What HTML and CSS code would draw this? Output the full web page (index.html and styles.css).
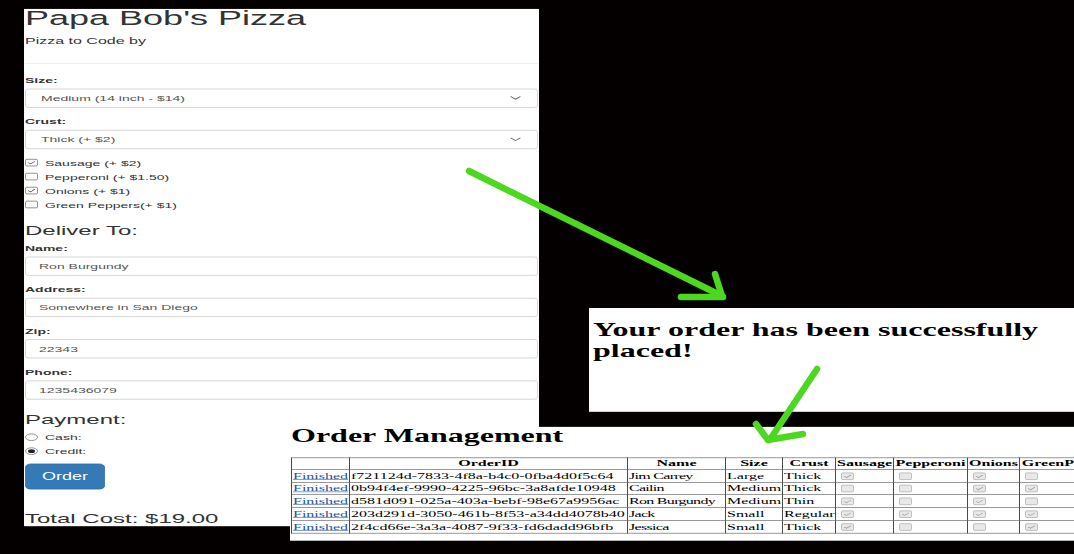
FILE: index.html
```html
<!DOCTYPE html>
<html lang="en">
<head>
<meta charset="utf-8">
<title>Papa Bob's Pizza</title>
<link rel="stylesheet" href="styles.css">
</head>
<body>
<div class="stage">
  <section class="win order-form">
    <h1 class="brand">Papa Bob's Pizza</h1>
    <p class="lead">Pizza to Code by</p>
    <hr class="rule">

    <div class="form-group">
      <div class="lbl">Size:</div>
      <div class="control select"><span>Medium (14 inch - $14)</span><svg class="chev" viewBox="0 0 11 7"><path d="M0.6 0.8 L5.5 6 L10.4 0.8"/></svg></div>
    </div>
    <div class="form-group">
      <div class="lbl">Crust:</div>
      <div class="control select"><span>Thick (+ $2)</span><svg class="chev" viewBox="0 0 11 7"><path d="M0.6 0.8 L5.5 6 L10.4 0.8"/></svg></div>
    </div>

    <div class="check"><span class="box on"><svg viewBox="0 0 13 13"><path d="M2.5 6.5 L5.3 9.2 L10.5 3.8"/></svg></span>Sausage (+ $2)</div>
    <div class="check"><span class="box"></span>Pepperoni (+ $1.50)</div>
    <div class="check"><span class="box on"><svg viewBox="0 0 13 13"><path d="M2.5 6.5 L5.3 9.2 L10.5 3.8"/></svg></span>Onions (+ $1)</div>
    <div class="check"><span class="box"></span>Green Peppers(+ $1)</div>

    <h3 class="sub">Deliver To:</h3>
    <div class="form-group">
      <div class="lbl">Name:</div>
      <div class="control">Ron Burgundy</div>
    </div>
    <div class="form-group">
      <div class="lbl">Address:</div>
      <div class="control">Somewhere in San Diego</div>
    </div>
    <div class="form-group">
      <div class="lbl">Zip:</div>
      <div class="control">22343</div>
    </div>
    <div class="form-group">
      <div class="lbl">Phone:</div>
      <div class="control">1235436079</div>
    </div>

    <h3 class="sub">Payment:</h3>
    <div class="radio"><span class="dot"></span>Cash:</div>
    <div class="radio"><span class="dot on"></span>Credit:</div>

    <div class="actions"><span class="btn">Order</span></div>

    <h3 class="sub total">Total Cost: $19.00</h3>
  </section>

  <section class="win notice">
    <h1 class="notice-text">Your order has been successfully placed!</h1>
  </section>

  <section class="win manage">
    <h1 class="manage-title">Order Management</h1>
    <table class="orders">
      <colgroup>
        <col class="c1"><col class="c2"><col class="c3"><col class="c4"><col class="c5"><col class="c6"><col class="c7"><col class="c8"><col class="c9">
      </colgroup>
      <thead>
        <tr><th></th><th>OrderID</th><th>Name</th><th>Size</th><th>Crust</th><th>Sausage</th><th>Pepperoni</th><th>Onions</th><th>GreenPeppers</th></tr>
      </thead>
      <tbody>
        <tr>
          <td><a class="fin" href="#">Finished</a></td><td>f721124d-7833-4f8a-b4c0-0fba4d0f5c64</td><td class="nm">Jim Carrey</td><td>Large</td><td>Thick</td>
          <td><span class="tcb on"><svg viewBox="0 0 13 13"><path d="M2.5 6.5 L5.3 9.2 L10.5 3.8"/></svg></span></td>
          <td><span class="tcb"></span></td>
          <td><span class="tcb on"><svg viewBox="0 0 13 13"><path d="M2.5 6.5 L5.3 9.2 L10.5 3.8"/></svg></span></td>
          <td><span class="tcb"></span></td>
        </tr>
        <tr>
          <td><a class="fin" href="#">Finished</a></td><td>0b94f4ef-9990-4225-96bc-3a8afde10948</td><td class="nm">Cailin</td><td>Medium</td><td>Thick</td>
          <td><span class="tcb"></span></td>
          <td><span class="tcb"></span></td>
          <td><span class="tcb on"><svg viewBox="0 0 13 13"><path d="M2.5 6.5 L5.3 9.2 L10.5 3.8"/></svg></span></td>
          <td><span class="tcb on"><svg viewBox="0 0 13 13"><path d="M2.5 6.5 L5.3 9.2 L10.5 3.8"/></svg></span></td>
        </tr>
        <tr>
          <td><a class="fin" href="#">Finished</a></td><td>d581d091-025a-403a-bebf-98e67a9956ac</td><td class="nm">Ron Burgundy</td><td>Medium</td><td>Thin</td>
          <td><span class="tcb on"><svg viewBox="0 0 13 13"><path d="M2.5 6.5 L5.3 9.2 L10.5 3.8"/></svg></span></td>
          <td><span class="tcb"></span></td>
          <td><span class="tcb on"><svg viewBox="0 0 13 13"><path d="M2.5 6.5 L5.3 9.2 L10.5 3.8"/></svg></span></td>
          <td><span class="tcb"></span></td>
        </tr>
        <tr>
          <td><a class="fin" href="#">Finished</a></td><td>203d291d-3050-461b-8f53-a34dd4078b40</td><td class="nm">Jack</td><td>Small</td><td>Regular</td>
          <td><span class="tcb on"><svg viewBox="0 0 13 13"><path d="M2.5 6.5 L5.3 9.2 L10.5 3.8"/></svg></span></td>
          <td><span class="tcb on"><svg viewBox="0 0 13 13"><path d="M2.5 6.5 L5.3 9.2 L10.5 3.8"/></svg></span></td>
          <td><span class="tcb on"><svg viewBox="0 0 13 13"><path d="M2.5 6.5 L5.3 9.2 L10.5 3.8"/></svg></span></td>
          <td><span class="tcb on"><svg viewBox="0 0 13 13"><path d="M2.5 6.5 L5.3 9.2 L10.5 3.8"/></svg></span></td>
        </tr>
        <tr>
          <td><a class="fin" href="#">Finished</a></td><td>2f4cd66e-3a3a-4087-9f33-fd6dadd96bfb</td><td class="nm">Jessica</td><td>Small</td><td>Thick</td>
          <td><span class="tcb on"><svg viewBox="0 0 13 13"><path d="M2.5 6.5 L5.3 9.2 L10.5 3.8"/></svg></span></td>
          <td><span class="tcb"></span></td>
          <td><span class="tcb"></span></td>
          <td><span class="tcb on"><svg viewBox="0 0 13 13"><path d="M2.5 6.5 L5.3 9.2 L10.5 3.8"/></svg></span></td>
        </tr>
      </tbody>
    </table>
  </section>
</div>

<svg class="arrows" viewBox="0 0 1074 554" width="1074" height="554">
  <path d="M469 171 L722 296"/>
  <path d="M681 297 L723 297"/>
  <path d="M715 274 L722 296"/>
  <path d="M817 369 L771 438"/>
  <path d="M756 424 L768 440 L803 434"/>
</svg>
</body>
</html>
```

FILE: styles.css
```css
* { box-sizing: border-box; }

html {
  margin: 0;
  padding: 0;
  height: 554px;
  overflow: hidden;
}

body {
  margin: 0;
  padding: 0;
  width: 1074px;
  height: 554px;
  overflow: hidden;
  position: relative;
  background: #050000;
  font-family: "Liberation Sans", Arial, sans-serif;
}

/* The collage was captured at full size and squeezed vertically */
.stage {
  position: absolute;
  left: 0;
  top: 0;
  width: 1074px;
  height: 993px;
  transform: scaleY(0.558);
  transform-origin: 0 0;
}

.win {
  position: absolute;
  background: #fff;
  overflow: hidden;
}

/* ---------- order form ---------- */
.order-form {
  left: 24px;
  top: 16.1px;
  width: 515px;
  height: 926.5px;
  padding: 0 1px;
  overflow: visible;
  color: #333;
  font-size: 14px;
  line-height: 20px;
}

.brand {
  font-size: 36px;
  font-weight: 500;
  line-height: 34px;
  margin: 0 0 12.6px;
}

.lead {
  font-size: 16px;
  line-height: 22.86px;
  margin: 0;
}

.rule {
  height: 0;
  border: 0;
  border-top: 1px solid #e6e6e6;
  margin: 27px 0 20px;
}

.form-group { margin-bottom: 15px; }

.lbl {
  font-weight: 700;
  margin-bottom: 5px;
}

.control {
  height: 34px;
  border: 1px solid #ccc;
  border-radius: 4px;
  padding: 0 13px;
  color: #555;
  display: flex;
  align-items: center;
}

.select {
  padding: 0 16px 0 15px;
  justify-content: space-between;
}

.chev {
  width: 11px;
  height: 7px;
  fill: none;
  stroke: #555;
  stroke-width: 1.1;
}

.check, .radio {
  display: flex;
  align-items: center;
  margin: 10px 0;
}

.radio { margin-top: 8.2px; }

.check + .check, .radio + .radio { margin-top: -5px; }

.box {
  width: 13px;
  height: 13px;
  border: 1px solid #767676;
  border-radius: 2px;
  margin-right: 7px;
  background: #fff;
  display: flex;
}

.box svg, .tcb svg {
  width: 100%;
  height: 100%;
  fill: none;
  stroke: #444;
  stroke-width: 1.2;
}

.dot {
  width: 13px;
  height: 13px;
  border: 1px solid #767676;
  border-radius: 50%;
  margin-right: 7px;
  display: flex;
  align-items: center;
  justify-content: center;
}

.dot.on::after {
  content: "";
  width: 7px;
  height: 7px;
  border-radius: 50%;
  background: #222;
}

.sub {
  font-size: 24px;
  font-weight: 500;
  line-height: 1.1;
  margin: 23.6px 0 8.2px;
}

.actions {
  display: flex;
  margin-top: 12.2px;
}

.btn {
  padding: 10px 16px;
  font-size: 18px;
  line-height: 24px;
  color: #fff;
  background: #337ab7;
  border: 1px solid #2e6da4;
  border-radius: 6px;
}

.total { margin-top: 38.7px; }

/* ---------- confirmation ---------- */
.notice {
  left: 589px;
  top: 552px;
  width: 485px;
  height: 186.4px;
  padding-left: 4px;
}

.notice-text {
  font-family: "Liberation Serif", "Times New Roman", serif;
  font-size: 32px;
  font-weight: 700;
  line-height: normal;
  margin: 21.44px 0;
  color: #000;
}

/* ---------- order management ---------- */
.manage {
  left: 290px;
  top: 765.2px;
  width: 784px;
  height: 204.3px;
  padding-left: 1px;
  font-family: "Liberation Serif", "Times New Roman", serif;
  color: #000;
}

.manage-title {
  font-size: 32px;
  font-weight: 700;
  line-height: 33px;
  margin: 0 0 21.5px;
}

.orders {
  border-collapse: collapse;
  table-layout: fixed;
  width: 830px;
  font-size: 16px;
}

.c1 { width: 58px; }
.c2 { width: 278px; }
.c3 { width: 98px; }
.c4 { width: 57px; }
.c5 { width: 53px; }
.c6 { width: 58px; }
.c7 { width: 74px; }
.c8 { width: 52px; }
.c9 { width: 102px; }

.orders th, .orders td {
  border: 1px solid #4a4a4a;
  padding: 1px;
  white-space: nowrap;
  overflow: hidden;
}

.orders th {
  text-align: center;
  font-weight: 700;
}

.orders td { text-align: left; }

.orders thead tr { height: 20.8px; }
.orders tbody tr { height: 22.6px; }

.nm { letter-spacing: -0.7px; }

.fin {
  color: #1f55a0;
  text-decoration: underline;
}

.tcb {
  display: inline-flex;
  width: 13px;
  height: 13px;
  margin: 3px 3px 3px 4px;
  border: 1px solid #b0b0b0;
  border-radius: 2px;
  background: #e8e8e8;
  vertical-align: middle;
}

.tcb svg { stroke: #9a9a9a; }

/* ---------- annotation arrows ---------- */
.arrows {
  position: absolute;
  left: 0;
  top: 0;
  fill: none;
  stroke: #4bd81f;
  stroke-width: 6.5;
  stroke-linecap: round;
  stroke-linejoin: round;
  pointer-events: none;
}
```
